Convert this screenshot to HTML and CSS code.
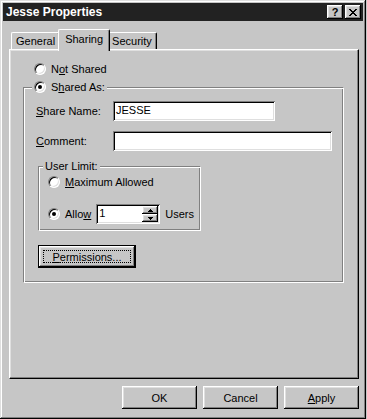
FILE: index.html
```html
<!DOCTYPE html>
<html lang="en">
  <head>
    <meta charset="UTF-8" />
    <title>Jesse Properties</title>
    <link rel="stylesheet" href="styles.css">
  </head>
  <body>
    <div class="window">
      <div class="titlebar">
        <span class="title">Jesse Properties</span>
        <div class="caption-btns">
          <span class="cap-btn help">?</span>
          <span class="cap-btn">
            <svg width="8" height="7" viewBox="0 0 8 7">
              <path d="M0 0h2v1h1v1h2v-1h1v-1h2v1h-1v1h-1v1h-1v1h1v1h1v1h1v1h-2v-1h-1v-1h-2v1h-1v1h-2v-1h1v-1h1v-1h1v-1h-1v-1h-1v-1h-1z" fill="#000"/>
            </svg>
          </span>
        </div>
      </div>

      <div class="tabs">
        <span class="tab">General</span>
        <span class="tab active">Sharing</span>
        <span class="tab">Security</span>
      </div>

      <div class="panel">
        <div class="radio-row">
          <span class="radio"></span>
          <span>N<u>o</u>t Shared</span>
        </div>

        <fieldset class="group shared">
          <legend class="radio-row">
            <span class="radio checked"></span>
            <span>S<u>h</u>ared As:</span>
          </legend>

          <div class="form-grid">
            <label><u>S</u>hare Name:</label>
            <span class="edit name-edit">JESSE</span>
            <label><u>C</u>omment:</label>
            <span class="edit comment-edit"></span>
          </div>

          <fieldset class="group limit">
            <legend>User Limit:</legend>
            <div class="radio-row">
              <span class="radio"></span>
              <span><u>M</u>aximum Allowed</span>
            </div>
            <div class="radio-row allow-row">
              <span class="radio checked"></span>
              <span>Allo<u>w</u></span>
              <span class="spin">
                <span class="spin-value">1</span>
                <span class="spin-btns">
                  <span class="spin-btn">
                    <svg width="5" height="3" viewBox="0 0 5 3"><path d="M2 0h1v1h1v1h1v1h-5v-1h1v-1h1z" fill="#000"/></svg>
                  </span>
                  <span class="spin-btn">
                    <svg width="5" height="3" viewBox="0 0 5 3"><path d="M0 0h5v1h-1v1h-1v1h-1v-1h-1v-1h-1z" fill="#000"/></svg>
                  </span>
                </span>
              </span>
              <span>Users</span>
            </div>
          </fieldset>

          <button class="btn default-btn"><span class="focus"><u>P</u>ermissions...</span></button>
        </fieldset>
      </div>

      <div class="actions">
        <button class="btn">OK</button>
        <button class="btn">Cancel</button>
        <button class="btn"><u>A</u>pply</button>
      </div>
    </div>
  </body>
</html>
```

FILE: styles.css
```css
body {
  margin: 0;
  background: #c6c6c6;
  font-family: "Liberation Sans", Arial, sans-serif;
  font-size: 11px;
  color: #000;
}

u {
  text-decoration: underline;
  text-underline-offset: 1px;
}

.window {
  width: 366px;
  height: 419px;
  box-sizing: border-box;
  padding: 3px;
  background: #c6c6c6;
  box-shadow: inset -1px -1px #000, inset 1px 1px #dfdfdf, inset -2px -2px #808080, inset 2px 2px #fff;
}

/* title bar */
.titlebar {
  height: 18px;
  background: #222;
  display: flex;
  align-items: center;
  justify-content: space-between;
  padding: 0 2px 0 3px;
}

.title {
  color: #fff;
  font-weight: bold;
  font-size: 12px;
}

.caption-btns {
  display: flex;
  gap: 2px;
}

.cap-btn {
  width: 16px;
  height: 14px;
  box-sizing: border-box;
  background: #c6c6c6;
  display: flex;
  align-items: center;
  justify-content: center;
  box-shadow: inset -1px -1px #000, inset 1px 1px #fff, inset -2px -2px #808080, inset 2px 2px #dfdfdf;
}

.cap-btn.help {
  font-weight: bold;
  font-size: 11px;
  line-height: 14px;
}

/* tabs */
.tabs {
  display: flex;
  align-items: flex-end;
  height: 22px;
  margin: 8px 0 -2px 8px;
  position: relative;
  z-index: 1;
}

.tab {
  height: 17px;
  box-sizing: border-box;
  padding: 0 4px;
  margin-bottom: 2px;
  display: flex;
  align-items: center;
  background: #c6c6c6;
  border-top: 1px solid #fff;
  border-left: 1px solid #fff;
  border-right: 1px solid #000;
  border-top-left-radius: 2px;
  border-top-right-radius: 2px;
  box-shadow: inset -1px 0 #808080;
}

.tab.active {
  height: 22px;
  margin: 0 -2px;
  padding: 0 6px 3px;
  position: relative;
  z-index: 1;
}

.tab.active + .tab {
  border-left: none;
}

/* page */
.panel {
  width: 350px;
  height: 330px;
  margin-left: 6px;
  box-sizing: border-box;
  padding: 12px 0 0 24px;
  border-top: 1px solid #fff;
  border-left: 1px solid #fff;
  border-right: 1px solid #000;
  border-bottom: 1px solid #000;
  box-shadow: inset -1px -1px #808080, inset 1px 1px #dfdfdf;
}

.radio-row {
  display: flex;
  align-items: center;
  gap: 5px;
  height: 14px;
}

.radio {
  width: 12px;
  height: 12px;
  box-sizing: border-box;
  border-radius: 50%;
  background: #fff;
  border: 1px solid;
  border-color: #808080 #fff #fff #808080;
  box-shadow: inset 1px 1px #000, inset -1px -1px #dfdfdf;
  position: relative;
  flex: none;
}

.radio.checked::after {
  content: "";
  position: absolute;
  left: 3px;
  top: 3px;
  width: 4px;
  height: 4px;
  border-radius: 50%;
  background: #000;
}

.group {
  margin: 0;
  border: 1px solid;
  border-color: #808080 #fff #fff #808080;
  box-shadow: inset 1px 1px #fff, inset -1px -1px #808080;
}

.group legend {
  padding: 0 2px;
  background: #c6c6c6;
}

.shared {
  width: 321px;
  box-sizing: border-box;
  margin: 4px 0 0 -11px;
  padding: 7px 10px 14px 12px;
}

.shared > legend {
  margin-left: -4px;
  height: 14px;
}

.form-grid {
  display: grid;
  grid-template-columns: 77px auto;
  row-gap: 10px;
  align-items: center;
}

.edit {
  height: 20px;
  box-sizing: border-box;
  background: #fff;
  padding: 3px 3px 0;
  box-shadow: inset 1px 1px #808080, inset -1px -1px #fff, inset 2px 2px #000, inset -2px -2px #dfdfdf;
}

.name-edit {
  width: 162px;
}

.comment-edit {
  width: 219px;
}

.limit {
  width: 163px;
  box-sizing: border-box;
  margin: 9px 0 0 2px;
  padding: 3px 6px 6px 9px;
}

.limit legend {
  margin-left: -5px;
}

.limit .radio-row + .radio-row {
  margin-top: 15px;
}

.allow-row {
  height: 20px;
}

.spin {
  width: 64px;
  height: 20px;
  box-sizing: border-box;
  display: flex;
  padding: 2px;
  background: #fff;
  box-shadow: inset 1px 1px #808080, inset -1px -1px #fff, inset 2px 2px #000, inset -2px -2px #dfdfdf;
}

.spin-value {
  flex: 1;
  padding: 1px 0 0 1px;
}

.spin-btns {
  width: 16px;
  display: flex;
  flex-direction: column;
}

.spin-btn {
  flex: 1;
  display: flex;
  align-items: center;
  justify-content: center;
  background: #c6c6c6;
  box-shadow: inset -1px -1px #000, inset 1px 1px #fff, inset -2px -2px #808080, inset 2px 2px #dfdfdf;
}

/* buttons */
.btn {
  width: 75px;
  height: 23px;
  padding: 0;
  border: none;
  background: #c6c6c6;
  font: inherit;
  color: #000;
  box-shadow: inset -1px -1px #000, inset 1px 1px #fff, inset -2px -2px #808080, inset 2px 2px #dfdfdf;
}

.default-btn {
  display: flex;
  width: 98px;
  margin: 14px 0 0 2px;
  padding: 4px;
  border: 1px solid #000;
  box-shadow: inset -1px -1px #000, inset 1px 1px #fff, inset -2px -2px #808080, inset 2px 2px #dfdfdf;
}

.focus {
  flex: 1;
  display: flex;
  align-items: center;
  justify-content: center;
  border: 1px dotted #000;
}

.actions {
  width: 350px;
  margin: 7px 0 0 6px;
  display: flex;
  justify-content: flex-end;
  gap: 6px;
}
```
